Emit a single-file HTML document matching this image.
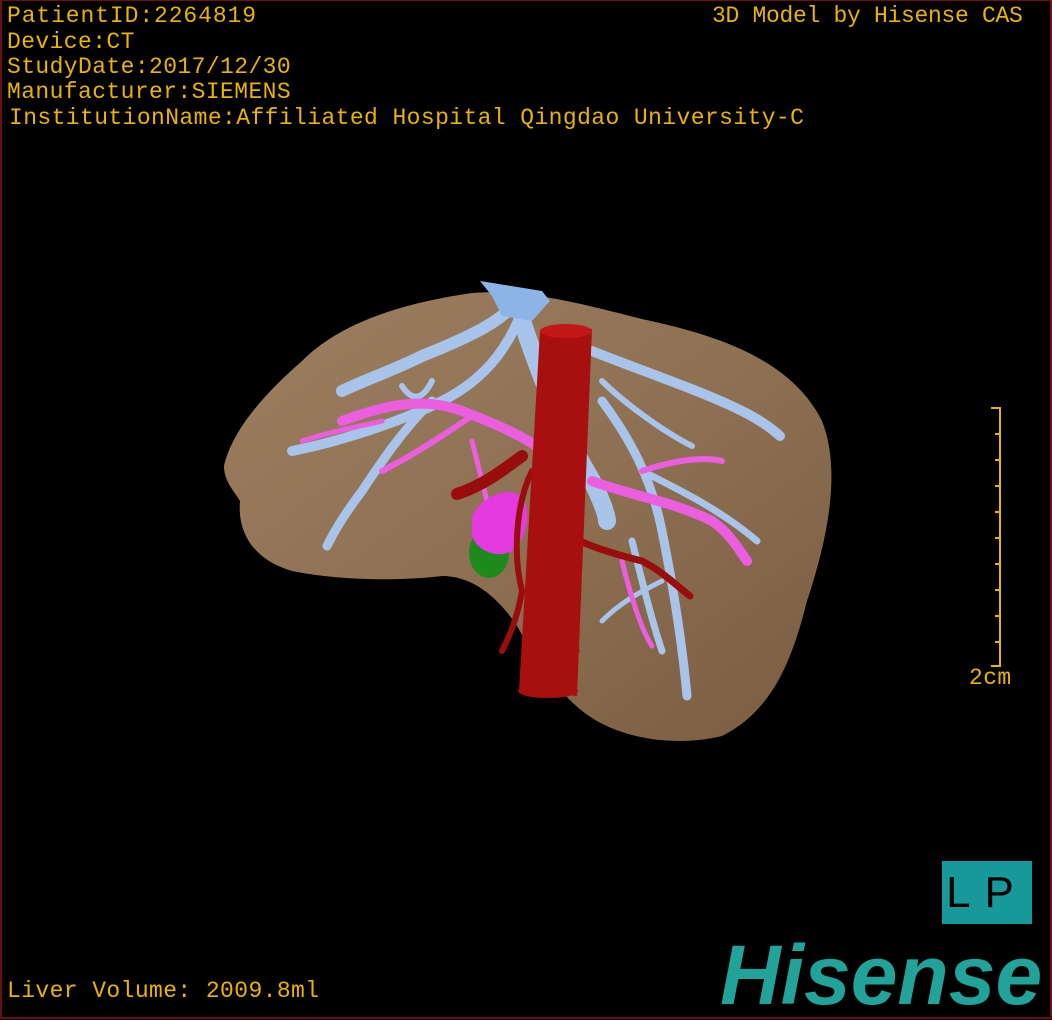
<!DOCTYPE html>
<html><head><style>
html,body{margin:0;padding:0;background:#000;}
#c{position:relative;width:1048px;height:1016px;border:2px solid #6a1010;border-top:1px solid #6a1010;background:#000;overflow:hidden;font-family:"Liberation Mono","DejaVu Sans Mono",monospace;}
.t{position:absolute;color:#e8b400;font-size:23px;line-height:25px;white-space:pre;letter-spacing:0.4px;}
</style></head><body>
<div id="c">
<svg width="1048" height="1016" style="position:absolute;left:0;top:0">
<defs>
<linearGradient id="lg" x1="0" y1="0" x2="1" y2="1">
<stop offset="0" stop-color="#9c8060"/><stop offset="0.5" stop-color="#8e7052"/><stop offset="1" stop-color="#7a5d42"/>
</linearGradient>
</defs>
<path d="M222,465 C230,430 260,395 300,360 C330,330 380,305 470,292 C520,288 570,300 640,318 C720,335 790,360 820,420 C840,470 825,540 805,600 C790,660 770,710 720,735 C680,745 630,740 595,720 C560,700 535,660 515,625 C495,595 470,575 440,575 C400,580 340,580 290,570 C255,560 235,535 238,500 C232,490 222,480 222,465 Z" fill="url(#lg)"/>
<g fill="none" stroke="#a9c4ea" stroke-linecap="round">
<path d="M515,300 C500,320 470,335 420,355 C390,370 360,380 340,390" stroke-width="12"/>
<path d="M520,310 C505,350 480,380 440,400 C400,420 340,440 290,450" stroke-width="10"/>
<path d="M430,400 C400,430 380,460 360,490 C345,510 335,525 325,545" stroke-width="9"/>
<path d="M520,320 C540,380 560,430 590,480 C600,500 605,515 605,520" stroke-width="18"/>
<path d="M590,350 C640,370 700,390 740,410 C760,420 770,428 778,435" stroke-width="10"/>
<path d="M600,400 C630,440 650,480 660,530 C670,580 680,640 685,695" stroke-width="9"/>
<path d="M640,470 C680,490 720,510 755,540" stroke-width="7"/>
<path d="M630,540 C640,580 650,620 660,650" stroke-width="7"/>
<path d="M600,620 C620,600 640,590 660,580" stroke-width="5"/>
<path d="M430,380 C420,400 410,400 400,385" stroke-width="6"/>
<path d="M600,380 C620,400 660,430 690,445" stroke-width="6"/>
</g>
<path d="M478,280 L540,290 L548,300 L530,320 L500,315 L490,295 Z" fill="#8cb4e4"/>
<g fill="none" stroke="#ec5ee0" stroke-linecap="round">
<path d="M340,420 C380,405 420,395 460,410 C500,425 530,440 540,450" stroke-width="10"/>
<path d="M470,415 C440,435 410,455 380,470" stroke-width="6"/>
<path d="M300,440 C330,430 360,425 380,420" stroke-width="5"/>
<path d="M590,480 C630,495 670,500 710,520 C725,530 735,545 745,560" stroke-width="10"/>
<path d="M640,470 C670,460 700,455 720,460" stroke-width="6"/>
<path d="M620,560 C630,600 640,630 650,645" stroke-width="5"/>
<path d="M470,440 C475,460 480,480 485,500" stroke-width="5"/>
</g>
<ellipse cx="487" cy="552" rx="20" ry="25" fill="#1e8a1e"/>
<path d="M470,515 C480,495 505,485 520,495 C530,510 525,540 510,550 C495,558 475,550 470,535 Z" fill="#e43ae0"/>
<g fill="none" stroke="#9a0d0d" stroke-linecap="round">
<path d="M520,455 C500,470 480,485 455,493" stroke-width="12"/>
<path d="M545,520 C570,540 600,550 640,560 C660,570 675,585 688,595" stroke-width="7"/>
<path d="M530,470 C515,500 510,550 520,590 C515,620 505,640 500,650" stroke-width="6"/>
<path d="M560,600 C565,620 570,640 575,650" stroke-width="5"/>
</g>
<path d="M538,330 L590,328 L575,695 L517,690 Z" fill="#a81010"/>
<ellipse cx="564" cy="330" rx="26" ry="7" fill="#c41818"/>
<ellipse cx="546" cy="690" rx="30" ry="7" fill="#a81010"/>
<line x1="998" y1="406" x2="998" y2="666" stroke="#e8b400" stroke-width="2"/>
<g stroke="#e8b400" stroke-width="2">
<line x1="989" y1="407" x2="998" y2="407"/><line x1="989" y1="665" x2="998" y2="665"/>
<line x1="993" y1="433" x2="998" y2="433"/><line x1="993" y1="459" x2="998" y2="459"/>
<line x1="993" y1="485" x2="998" y2="485"/><line x1="993" y1="511" x2="998" y2="511"/>
<line x1="993" y1="537" x2="998" y2="537"/><line x1="993" y1="563" x2="998" y2="563"/>
<line x1="993" y1="589" x2="998" y2="589"/><line x1="993" y1="615" x2="998" y2="615"/>
<line x1="993" y1="641" x2="998" y2="641"/>
</g>
</svg>
<div class="t" style="left:5px;top:3px;letter-spacing:0.9px">PatientID:2264819</div>
<div class="t" style="left:5px;top:29px">Device:CT</div>
<div class="t" style="left:5px;top:54px">StudyDate:2017/12/30</div>
<div class="t" style="left:5px;top:79px">Manufacturer:SIEMENS</div>
<div class="t" style="left:7px;top:105px">InstitutionName:Affiliated Hospital Qingdao University-C</div>
<div class="t" style="left:710px;top:3px;letter-spacing:-0.3px">3D Model by Hisense CAS</div>
<div class="t" style="left:967px;top:665px">2cm</div>
<div class="t" style="left:5px;top:978px">Liver Volume: 2009.8ml</div>
<div style="position:absolute;left:940px;top:860px;width:90px;height:63px;background:#17999a;color:#000;font-family:'Liberation Sans',sans-serif;font-size:44px;line-height:63px;text-align:center;letter-spacing:14px;">LP</div>
<div style="position:absolute;left:718px;top:932px;color:#21a39a;font-family:'Liberation Sans',sans-serif;font-weight:bold;font-style:italic;font-size:84px;line-height:84px;letter-spacing:0px;">Hisense</div>
</div>
</body></html>
